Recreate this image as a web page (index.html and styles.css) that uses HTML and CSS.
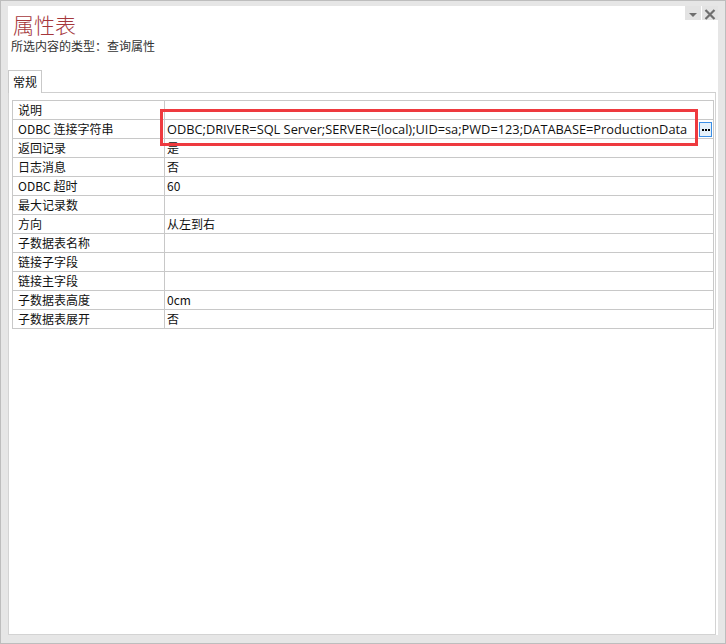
FILE: index.html
```html
<!DOCTYPE html>
<html>
<head>
<meta charset="utf-8">
<link rel="stylesheet" href="styles.css">
</head>
<body>
<div class="window">
  <div class="panel">
    <div class="header">
      <div class="titles">
        <div class="title">属性表</div>
        <div class="subtitle">所选内容的类型：查询属性</div>
      </div>
      <div class="winbtns">
        <div class="wbtn"><svg width="16" height="14" viewBox="0 0 16 14"><path d="M4 7 L12 7 L8 11 Z" fill="#6e6e6e"/></svg></div>
        <div class="wbtn"><svg width="16" height="14" viewBox="0 0 16 14"><path d="M3.5 4 L12.5 13 M12.5 4 L3.5 13" stroke="#707070" stroke-width="2.2" fill="none"/></svg></div>
      </div>
    </div>
    <div class="tabs">
      <div class="tab">常规</div>
      <div class="tabline"></div>
    </div>
    <div class="content">
      <div class="grid">
        <div class="row"><div class="k">说明</div><div class="v"></div></div>
        <div class="row"><div class="k">ODBC 连接字符串</div><div class="v mono">ODBC;DRIVER=SQL Server;SERVER=(local);UID=sa;PWD=123;DATABASE=ProductionData<span class="dots"><svg width="11" height="13" viewBox="0 0 11 13"><rect x="2" y="6" width="2" height="2" fill="#000"/><rect x="5" y="6" width="2" height="2" fill="#000"/><rect x="8" y="6" width="2" height="2" fill="#000"/></svg></span></div></div>
        <div class="row"><div class="k">返回记录</div><div class="v">是</div></div>
        <div class="row"><div class="k">日志消息</div><div class="v">否</div></div>
        <div class="row"><div class="k">ODBC 超时</div><div class="v">60</div></div>
        <div class="row"><div class="k">最大记录数</div><div class="v"></div></div>
        <div class="row"><div class="k">方向</div><div class="v">从左到右</div></div>
        <div class="row"><div class="k">子数据表名称</div><div class="v"></div></div>
        <div class="row"><div class="k">链接子字段</div><div class="v"></div></div>
        <div class="row"><div class="k">链接主字段</div><div class="v"></div></div>
        <div class="row"><div class="k">子数据表高度</div><div class="v">0cm</div></div>
        <div class="row"><div class="k">子数据表展开</div><div class="v">否</div></div>
      </div>
      <div class="highlight"></div>
    </div>
  </div>
</div>
</body>
</html>
```

FILE: styles.css
```css
html, body {
  margin: 0;
  padding: 0;
}
body {
  font-family: "Noto Sans CJK SC", "Noto Sans", sans-serif;
  font-size: 12px;
  color: #111;
}
.window {
  width: 726px;
  height: 644px;
  box-sizing: border-box;
  border: 1px solid #bdbdbd;
  background: #e6e6e6;
  padding: 5px 7px 8px 7px;
}
.panel {
  height: 100%;
  background: #fff;
  display: flex;
  flex-direction: column;
}
.header {
  height: 64px;
  display: flex;
  justify-content: space-between;
  align-items: flex-start;
}
.titles {
  padding: 5px 0 0 5px;
}
.title {
  font-size: 21px;
  line-height: 27px;
  color: #a5373b;
  font-weight: 300;
}
.subtitle {
  font-size: 12px;
  line-height: 16px;
  color: #333;
  margin-left: -2px;
}
.winbtns {
  display: flex;
  gap: 1px;
}
.wbtn {
  width: 16px;
  height: 14px;
  background: #e3e3e3;
  display: flex;
}
.tabs {
  height: 23px;
  display: flex;
  align-items: stretch;
}
.tab {
  box-sizing: border-box;
  width: 34px;
  border: 1px solid #c9c9c9;
  border-bottom: none;
  padding-left: 4px;
  line-height: 22px;
  color: #111;
}
.tabline {
  width: 674px;
  border-bottom: 1px solid #cfcfcf;
}
.content {
  flex: 1;
  margin-right: 2px;
  border: 1px solid #d3d3d3;
  border-top: none;
  position: relative;
  padding: 7px 1px 0 3px;
}
.grid {
  border-top: 1px solid #c8c8c8;
  border-left: 1px solid #c8c8c8;
}
.row {
  display: grid;
  grid-template-columns: 152px 1fr;
  height: 19px;
  box-sizing: border-box;
  border-bottom: 1px solid #c8c8c8;
}
.k, .v {
  line-height: 18px;
  border-right: 1px solid #c8c8c8;
  white-space: nowrap;
  overflow: hidden;
}
.k {
  padding-left: 5px;
}
.v {
  padding-left: 2px;
  position: relative;
}
.mono {
  font-family: "Open Sans", "Noto Sans", sans-serif;
  font-size: 12.8px;
}
.dots {
  position: absolute;
  right: 1px;
  top: 2px;
  width: 11px;
  height: 13px;
  background: #e5f1fb;
  border: 1px solid #3a8ee6;
  display: flex;
}
.highlight {
  position: absolute;
  left: 151px;
  top: 16px;
  width: 532px;
  height: 31px;
  border: 3px solid #ee3a3f;
  pointer-events: none;
}
```
